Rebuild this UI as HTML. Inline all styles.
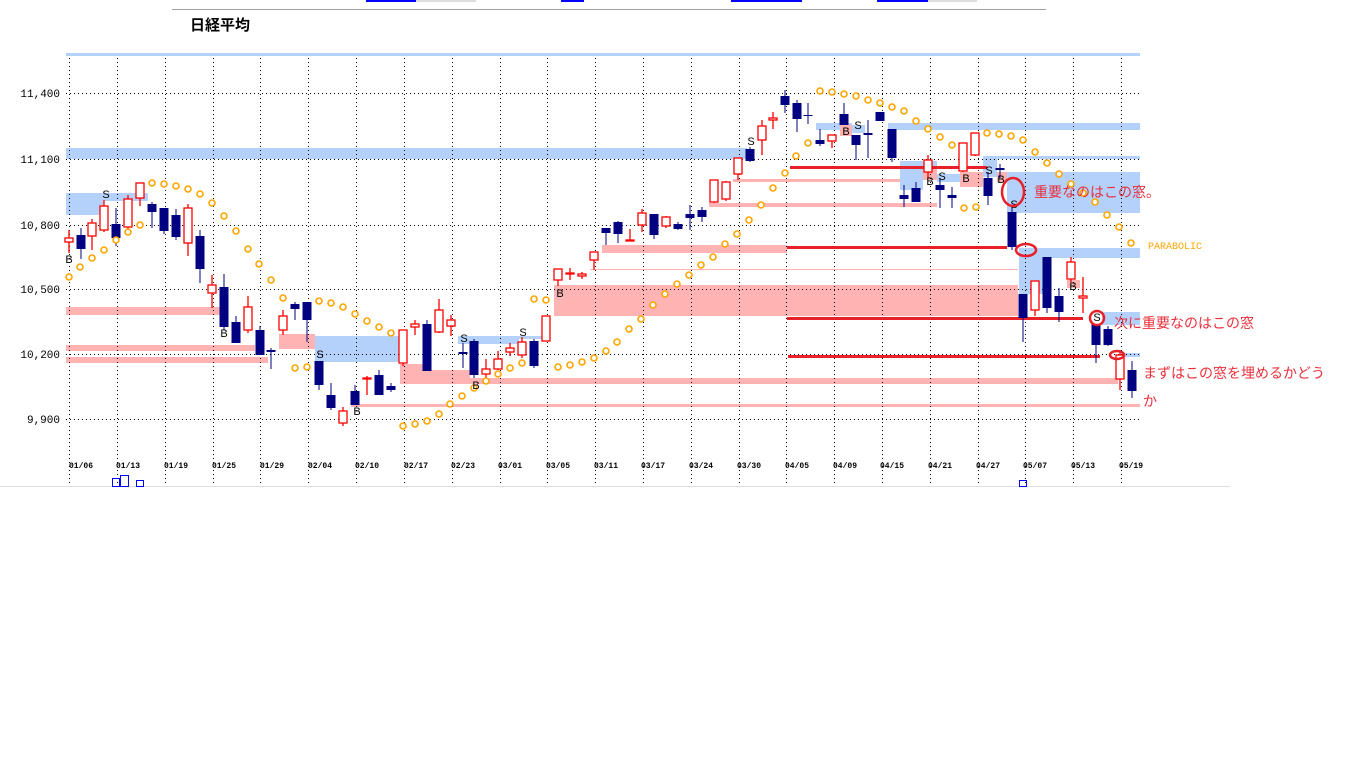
<!DOCTYPE html>
<html><head><meta charset="utf-8"><style>
html,body{margin:0;padding:0;background:#fff;width:1366px;height:768px;overflow:hidden}
svg{position:absolute;left:0;top:0}
</style></head><body>
<svg width="1366" height="768" xmlns="http://www.w3.org/2000/svg" font-family="Liberation Mono, monospace">
<!-- top strip -->
<rect x="366" y="0" width="50" height="2" fill="#0000ff"/><rect x="416" y="0" width="60" height="2" fill="#ddd"/>
<rect x="561" y="0" width="23" height="2" fill="#0000ff"/>
<rect x="731" y="0" width="71" height="2" fill="#0000ff"/>
<rect x="877" y="0" width="51" height="2" fill="#0000ff"/><rect x="928" y="0" width="49" height="2" fill="#ddd"/>
<rect x="172" y="9" width="874" height="1" fill="#a0a0a0"/>
<text x="190" y="30" font-family="Liberation Sans, Noto Sans CJK JP, sans-serif" font-size="15" font-weight="bold">日経平均</text>
<rect x="0" y="486" width="1230" height="1" fill="#e0e0e0"/>
<!-- bands -->
<g fill="#b3d1fb">
<rect x="66" y="53" width="1074" height="3"/>
<rect x="66" y="148" width="681" height="11"/>
<rect x="66" y="193" width="38" height="22"/><rect x="104" y="193" width="44" height="8"/>
<rect x="315" y="336" width="87" height="26"/>
<rect x="458" y="336" width="61" height="8"/><rect x="519" y="336" width="24" height="3"/>
<rect x="816" y="123" width="36" height="7"/><rect x="852" y="125" width="13" height="8"/>
<rect x="888" y="123" width="252" height="7"/>
<rect x="900" y="161" width="23" height="29"/><rect x="923" y="161" width="14" height="13"/><rect x="937" y="174" width="23" height="8"/>
<rect x="983" y="156" width="14" height="21"/><rect x="997" y="156" width="143" height="3"/>
<rect x="1007" y="172" width="133" height="41"/>
<rect x="1019" y="248" width="121" height="10"/><rect x="1019" y="258" width="24" height="36"/>
<rect x="1102" y="312" width="38" height="13"/>
<rect x="1123" y="353" width="17" height="4"/>
</g>
<g fill="#ffb3b3">
<rect x="66" y="307" width="154" height="8"/>
<rect x="66" y="345" width="189" height="6"/>
<rect x="66" y="357" width="202" height="6"/>
<rect x="279" y="334" width="36" height="15"/>
<rect x="400" y="364" width="23" height="20"/><rect x="423" y="370" width="47" height="14"/>
<rect x="470" y="378" width="648" height="6"/>
<rect x="351" y="404" width="789" height="3"/>
<rect x="554" y="285" width="464" height="31"/>
<rect x="590" y="269" width="428" height="1"/>
<rect x="602" y="245" width="185" height="8"/>
<rect x="709" y="203" width="228" height="4"/>
<rect x="733" y="179" width="167" height="3"/>
<rect x="840" y="125" width="12" height="11"/>
<rect x="923" y="168" width="14" height="12"/>
<rect x="960" y="172" width="23" height="15"/>
<rect x="997" y="172" width="10" height="10"/>
<rect x="1067" y="280" width="13" height="8"/>
</g>
<!-- grid -->
<g stroke="#000" stroke-width="1" stroke-dasharray="1,3">
<line x1="66" y1="93.5" x2="1140" y2="93.5"/><line x1="66" y1="159.5" x2="1140" y2="159.5"/>
<line x1="66" y1="225.5" x2="1140" y2="225.5"/><line x1="66" y1="289.5" x2="1140" y2="289.5"/>
<line x1="66" y1="354.5" x2="1140" y2="354.5"/><line x1="66" y1="419.5" x2="1140" y2="419.5"/>
<line x1="69.5" y1="58" x2="69.5" y2="486"/><line x1="117.5" y1="58" x2="117.5" y2="486"/><line x1="165.5" y1="58" x2="165.5" y2="486"/><line x1="213.5" y1="58" x2="213.5" y2="486"/><line x1="260.5" y1="58" x2="260.5" y2="486"/><line x1="308.5" y1="58" x2="308.5" y2="486"/><line x1="356.5" y1="58" x2="356.5" y2="486"/><line x1="404.5" y1="58" x2="404.5" y2="486"/><line x1="452.5" y1="58" x2="452.5" y2="486"/><line x1="500.5" y1="58" x2="500.5" y2="486"/><line x1="547.5" y1="58" x2="547.5" y2="486"/><line x1="595.5" y1="58" x2="595.5" y2="486"/><line x1="643.5" y1="58" x2="643.5" y2="486"/><line x1="691.5" y1="58" x2="691.5" y2="486"/><line x1="739.5" y1="58" x2="739.5" y2="486"/><line x1="786.5" y1="58" x2="786.5" y2="486"/><line x1="834.5" y1="58" x2="834.5" y2="486"/><line x1="882.5" y1="58" x2="882.5" y2="486"/><line x1="930.5" y1="58" x2="930.5" y2="486"/><line x1="978.5" y1="58" x2="978.5" y2="486"/><line x1="1025.5" y1="58" x2="1025.5" y2="486"/><line x1="1073.5" y1="58" x2="1073.5" y2="486"/><line x1="1121.5" y1="58" x2="1121.5" y2="486"/>
</g>
<!-- y labels -->
<g font-size="11" text-anchor="end" fill="#000">
<text x="60" y="97">11,400</text><text x="60" y="163">11,100</text><text x="60" y="229">10,800</text>
<text x="60" y="293">10,500</text><text x="60" y="358">10,200</text><text x="60" y="423">9,900</text>
</g>
<g font-size="8" font-weight="bold" text-anchor="middle" fill="#000">
<text x="81" y="468">01/06</text><text x="128" y="468">01/13</text><text x="176" y="468">01/19</text><text x="224" y="468">01/25</text><text x="272" y="468">01/29</text><text x="320" y="468">02/04</text><text x="367" y="468">02/10</text><text x="416" y="468">02/17</text><text x="463" y="468">02/23</text><text x="510" y="468">03/01</text><text x="558" y="468">03/05</text><text x="606" y="468">03/11</text><text x="653" y="468">03/17</text><text x="701" y="468">03/24</text><text x="749" y="468">03/30</text><text x="797" y="468">04/05</text><text x="845" y="468">04/09</text><text x="892" y="468">04/15</text><text x="940" y="468">04/21</text><text x="988" y="468">04/27</text><text x="1035" y="468">05/07</text><text x="1083" y="468">05/13</text><text x="1131" y="468">05/19</text>
</g>
<g fill="none" stroke="#0000ff"><rect x="112.5" y="478.5" width="7" height="8"/><rect x="120.5" y="475.5" width="8" height="11"/><rect x="136.5" y="480.5" width="7" height="6"/><rect x="1019.5" y="480.5" width="7" height="6"/></g>
<!-- red lines -->
<g fill="#e8202a">
<rect x="790" y="166" width="197" height="3"/>
<rect x="787" y="246" width="220" height="3"/>
<rect x="787" y="317" width="296" height="3"/>
<rect x="788" y="355" width="312" height="3"/>
</g>
<!-- navy candles -->
<g stroke="#000080" fill="#000080">
<path d="M81 228V259M116 208V246M152 202V228M164 208V234M176 209V240M200 230V283M224 274V330M236 316V343M260 326V355M271 348V369M295 302V320M307 302V342M319 361V390M331 383V410M355 385V405M379 370V395M391 383V392M427 320V371M463 343V368M474 339V378M534 339V368M606 228V245M618 221V243M654 214V239M678 222V230M690 205V230M702 207V222M750 147V162M785 90V113M797 100V132M808 103V124M820 129V146M844 103V125M856 135V160M868 120V158M880 112V121M892 129V162M904 185V207M916 182V202M940 178V208M952 187V208M988 172V205M1000 164V178M1012 206V250M1023 294V342M1047 257V313M1059 288V322M1096 324V363M1108 326V346M1132 361V398"/>
<g stroke="none">
<rect x="76.5" y="235" width="9" height="14"/><rect x="111.5" y="224" width="9" height="14"/><rect x="147.5" y="204" width="9" height="8"/><rect x="159.5" y="208" width="9" height="23"/><rect x="171.5" y="215" width="9" height="22"/><rect x="195.5" y="236" width="9" height="33"/><rect x="219.5" y="287" width="9" height="40"/><rect x="231.5" y="322" width="9" height="21"/><rect x="255.5" y="330" width="9" height="25"/><rect x="266.5" y="350" width="9" height="2"/><rect x="290.5" y="304" width="9" height="5"/><rect x="302.5" y="302" width="9" height="18"/><rect x="314.5" y="361" width="9" height="24"/><rect x="326.5" y="395" width="9" height="13"/><rect x="350.5" y="391" width="9" height="14"/><rect x="374.5" y="375" width="9" height="20"/><rect x="386.5" y="386" width="9" height="4"/><rect x="422.5" y="324" width="9" height="47"/><rect x="458.5" y="352" width="9" height="2"/><rect x="469.5" y="341" width="9" height="34"/><rect x="529.5" y="341" width="9" height="25"/><rect x="601.5" y="228" width="9" height="5"/><rect x="613.5" y="222" width="9" height="12"/><rect x="649.5" y="214" width="9" height="21"/><rect x="673.5" y="224" width="9" height="5"/><rect x="685.5" y="214" width="9" height="4"/><rect x="697.5" y="210" width="9" height="7"/><rect x="745.5" y="149" width="9" height="12"/><rect x="780.5" y="96" width="9" height="9"/><rect x="792.5" y="103" width="9" height="16"/><rect x="803.5" y="115" width="9" height="1"/><rect x="815.5" y="140" width="9" height="4"/><rect x="839.5" y="114" width="9" height="11"/><rect x="851.5" y="135" width="9" height="10"/><rect x="863.5" y="133" width="9" height="2"/><rect x="875.5" y="112" width="9" height="9"/><rect x="887.5" y="129" width="9" height="29"/><rect x="899.5" y="195" width="9" height="4"/><rect x="911.5" y="188" width="9" height="14"/><rect x="935.5" y="185" width="9" height="5"/><rect x="947.5" y="195" width="9" height="3"/><rect x="983.5" y="178" width="9" height="18"/><rect x="995.5" y="168" width="9" height="2"/><rect x="1007.5" y="212" width="9" height="35"/><rect x="1018.5" y="294" width="9" height="24"/><rect x="1042.5" y="257" width="9" height="51"/><rect x="1054.5" y="296" width="9" height="16"/><rect x="1091.5" y="324" width="9" height="21"/><rect x="1103.5" y="329" width="9" height="16"/><rect x="1127.5" y="370" width="9" height="21"/>
</g></g>
<!-- red candles -->
<g stroke="#ff0000" stroke-width="1.3" fill="#fff">
<path d="M69 230V253M92 219V250M104 200V232M128 195V232M140 183V206M188 204V256M212 275V308M248 296V333M283 310V335M343 407V426M367 376V395M403 330V366M415 320V335M439 299V333M451 315V336M486 359V380M498 351V370M510 343V356M522 337V358M546 316V341M558 269V286M570 268V280M582 272V279M594 252V270M630 229V241M642 209V232M666 216V228M714 180V203M726 181V201M738 158V180M762 120V155M773 112V129M832 135V148M928 155V178M963 143V172M975 133V156M1035 281V316M1071 257V282M1083 277V313M1120 350V390"/>
<rect x="65" y="238" width="8" height="4"/><rect x="88" y="223" width="8" height="13"/><rect x="100" y="206" width="8" height="24"/><rect x="124" y="199" width="8" height="28"/><rect x="136" y="183" width="8" height="15"/><rect x="184" y="208" width="8" height="35"/><rect x="208" y="285" width="8" height="8"/><rect x="244" y="307" width="8" height="23"/><rect x="279" y="316" width="8" height="14"/><rect x="339" y="411" width="8" height="12"/><rect x="363" y="378" width="8" height="1"/><rect x="399" y="330" width="8" height="33"/><rect x="411" y="324" width="8" height="3"/><rect x="435" y="310" width="8" height="22"/><rect x="447" y="320" width="8" height="6"/><rect x="482" y="369" width="8" height="5"/><rect x="494" y="359" width="8" height="10"/><rect x="506" y="348" width="8" height="4"/><rect x="518" y="342" width="8" height="13"/><rect x="542" y="316" width="8" height="25"/><rect x="554" y="269" width="8" height="11"/><rect x="566" y="273" width="8" height="1"/><rect x="578" y="274" width="8" height="2"/><rect x="590" y="252" width="8" height="8"/><rect x="626" y="240" width="8" height="1"/><rect x="638" y="213" width="8" height="12"/><rect x="662" y="217" width="8" height="9"/><rect x="710" y="180" width="8" height="22"/><rect x="722" y="182" width="8" height="17"/><rect x="734" y="158" width="8" height="16"/><rect x="758" y="126" width="8" height="14"/><rect x="769" y="118" width="8" height="2"/><rect x="828" y="135" width="8" height="6"/><rect x="924" y="160" width="8" height="12"/><rect x="959" y="143" width="8" height="28"/><rect x="971" y="133" width="8" height="22"/><rect x="1031" y="281" width="8" height="29"/><rect x="1067" y="262" width="8" height="17"/><rect x="1079" y="296" width="8" height="2"/><rect x="1116" y="355" width="8" height="24"/>
</g>
<!-- parabolic -->
<g fill="#fff" stroke="#ffa500" stroke-width="1.6">
<circle cx="69" cy="277" r="3"/><circle cx="80" cy="267" r="3"/><circle cx="92" cy="258" r="3"/><circle cx="104" cy="250" r="3"/><circle cx="116" cy="240" r="3"/><circle cx="128" cy="232" r="3"/><circle cx="140" cy="225" r="3"/><circle cx="152" cy="183" r="3"/><circle cx="164" cy="184" r="3"/><circle cx="176" cy="186" r="3"/><circle cx="188" cy="189" r="3"/><circle cx="200" cy="194" r="3"/><circle cx="212" cy="203" r="3"/><circle cx="224" cy="216" r="3"/><circle cx="236" cy="231" r="3"/><circle cx="248" cy="249" r="3"/><circle cx="259" cy="264" r="3"/><circle cx="271" cy="280" r="3"/><circle cx="283" cy="298" r="3"/><circle cx="295" cy="368" r="3"/><circle cx="307" cy="367" r="3"/><circle cx="319" cy="301" r="3"/><circle cx="331" cy="303" r="3"/><circle cx="343" cy="307" r="3"/><circle cx="355" cy="314" r="3"/><circle cx="367" cy="321" r="3"/><circle cx="379" cy="327" r="3"/><circle cx="391" cy="333" r="3"/><circle cx="403" cy="426" r="3"/><circle cx="415" cy="424" r="3"/><circle cx="427" cy="421" r="3"/><circle cx="439" cy="414" r="3"/><circle cx="450" cy="404" r="3"/><circle cx="462" cy="396" r="3"/><circle cx="474" cy="388" r="3"/><circle cx="486" cy="381" r="3"/><circle cx="498" cy="374" r="3"/><circle cx="510" cy="368" r="3"/><circle cx="522" cy="363" r="3"/><circle cx="534" cy="299" r="3"/><circle cx="546" cy="300" r="3"/><circle cx="558" cy="367" r="3"/><circle cx="570" cy="365" r="3"/><circle cx="582" cy="362" r="3"/><circle cx="594" cy="358" r="3"/><circle cx="606" cy="351" r="3"/><circle cx="617" cy="342" r="3"/><circle cx="629" cy="329" r="3"/><circle cx="641" cy="319" r="3"/><circle cx="653" cy="305" r="3"/><circle cx="665" cy="294" r="3"/><circle cx="677" cy="284" r="3"/><circle cx="689" cy="275" r="3"/><circle cx="701" cy="265" r="3"/><circle cx="713" cy="257" r="3"/><circle cx="725" cy="244" r="3"/><circle cx="737" cy="234" r="3"/><circle cx="749" cy="220" r="3"/><circle cx="761" cy="205" r="3"/><circle cx="773" cy="188" r="3"/><circle cx="785" cy="173" r="3"/><circle cx="796" cy="156" r="3"/><circle cx="808" cy="143" r="3"/><circle cx="820" cy="91" r="3"/><circle cx="832" cy="92" r="3"/><circle cx="844" cy="94" r="3"/><circle cx="856" cy="96" r="3"/><circle cx="868" cy="100" r="3"/><circle cx="880" cy="103" r="3"/><circle cx="892" cy="107" r="3"/><circle cx="904" cy="111" r="3"/><circle cx="916" cy="121" r="3"/><circle cx="928" cy="129" r="3"/><circle cx="940" cy="137" r="3"/><circle cx="952" cy="145" r="3"/><circle cx="964" cy="208" r="3"/><circle cx="976" cy="207" r="3"/><circle cx="987" cy="133" r="3"/><circle cx="999" cy="134" r="3"/><circle cx="1011" cy="136" r="3"/><circle cx="1023" cy="140" r="3"/><circle cx="1035" cy="152" r="3"/><circle cx="1047" cy="163" r="3"/><circle cx="1059" cy="174" r="3"/><circle cx="1071" cy="184" r="3"/><circle cx="1083" cy="193" r="3"/><circle cx="1095" cy="202" r="3"/><circle cx="1107" cy="215" r="3"/><circle cx="1119" cy="227" r="3"/><circle cx="1131" cy="243" r="3"/>
</g>
<text x="1148" y="249" font-size="10" fill="#ffa500">PARABOLIC</text>
<!-- B/S labels -->
<g font-size="11" fill="#000" text-anchor="middle" font-family="Liberation Sans, sans-serif">
<text x="69" y="263">B</text><text x="106" y="198">S</text><text x="224" y="337">B</text><text x="320" y="358">S</text><text x="357" y="415">B</text><text x="464" y="342">S</text><text x="476" y="389">B</text><text x="523" y="336">S</text><text x="560" y="297">B</text><text x="751" y="145">S</text><text x="846" y="135">B</text><text x="858" y="129">S</text><text x="930" y="185">B</text><text x="942" y="180">S</text><text x="966" y="182">B</text><text x="989" y="174">S</text><text x="1001" y="183">B</text><text x="1014" y="208">S</text><text x="1073" y="290">B</text><text x="1097" y="321">S</text>
</g>
<!-- annotation circles -->
<g fill="none" stroke="#e8202a" stroke-width="2.5">
<ellipse cx="1013" cy="192" rx="11" ry="14"/>
<ellipse cx="1026" cy="250" rx="10" ry="6"/>
<circle cx="1097" cy="318" r="7"/>
<ellipse cx="1117" cy="355" rx="7" ry="4"/>
</g>
<g font-family="Liberation Sans, Noto Sans CJK JP, sans-serif" font-size="14" fill="#e8303c">
<text x="1034" y="197">重要なのはこの窓。</text>
<text x="1114" y="328">次に重要なのはこの窓</text>
<text x="1143" y="378">まずはこの窓を埋めるかどう</text>
<text x="1143" y="406">か</text>
</g>
</svg>
</body></html>
